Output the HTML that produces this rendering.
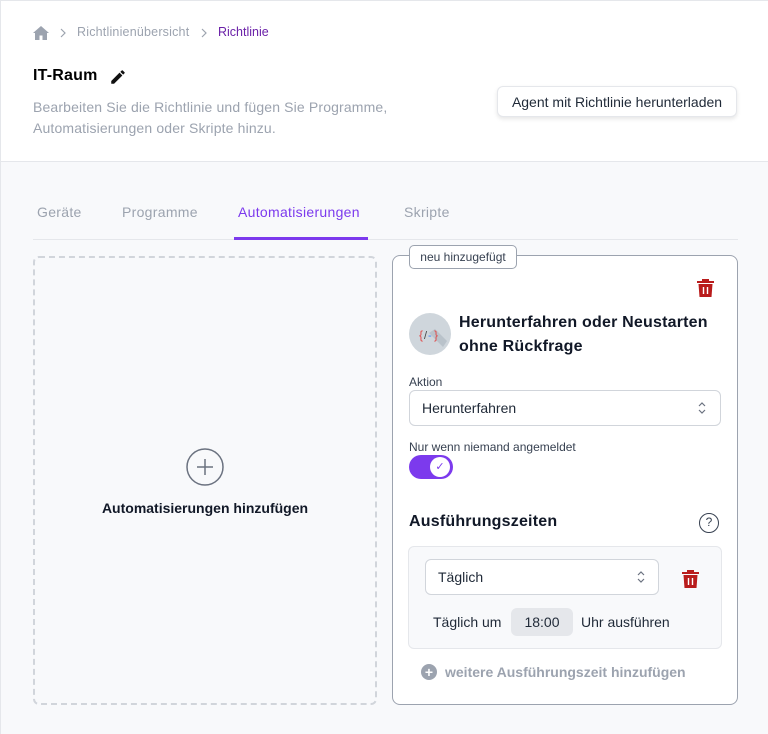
<!DOCTYPE html>
<html><head><meta charset="utf-8"><style>
*{box-sizing:border-box;margin:0;padding:0}
body{width:768px;height:734px;overflow:hidden;font-family:"Liberation Sans",sans-serif;background:#f8f9fb;position:relative;color:#111827}
.hdr{position:absolute;left:0;top:0;width:768px;height:162px;background:#fff;border-top:1px solid #e5e7eb;border-left:1px solid #e5e7eb;border-bottom:1px solid #e5e7eb}
.abs{position:absolute}
.bc{top:25px;font-size:12.5px;color:#9ca3af}
.tab{top:204px;font-size:14px;color:#9ca3af;letter-spacing:.3px}
.sel{border:1px solid #d1d5db;border-radius:6px;background:#fff;font-size:14px;color:#1f2937;padding-left:12px;display:flex;align-items:center}
</style></head><body>
<div class="hdr"></div>
<div style="position:absolute;left:0;top:162px;width:1px;height:572px;background:#e5e7eb"></div>
<svg class="abs" style="left:33px;top:26px" width="16" height="14" viewBox="0 0 16 14"><path d="M8 0L0 7h2v7h4.5V9.5h3V14H14V7h2z" fill="#9ca3af"/></svg>
<svg class="abs" style="left:60px;top:28px" width="6" height="10" viewBox="0 0 6 10"><path d="M1 1l4 4-4 4" fill="none" stroke="#9ca3af" stroke-width="1.2"/></svg>
<div class="abs bc" style="left:77px;letter-spacing:.2px">Richtlinienübersicht</div>
<svg class="abs" style="left:201px;top:28px" width="6" height="10" viewBox="0 0 6 10"><path d="M1 1l4 4-4 4" fill="none" stroke="#9ca3af" stroke-width="1.2"/></svg>
<div class="abs bc" style="left:218px;color:#6b21a8">Richtlinie</div>
<div class="abs" style="left:33px;top:67px;font-size:16px;font-weight:bold;color:#000;letter-spacing:.2px">IT-Raum</div>
<svg class="abs" style="left:109px;top:68px" width="18" height="18" viewBox="0 0 24 24"><path d="M3 17.25V21h3.75L17.81 9.94l-3.75-3.75L3 17.25zM20.71 7.04a1 1 0 000-1.41l-2.34-2.34a1 1 0 00-1.41 0l-1.83 1.83 3.75 3.75 1.83-1.83z" fill="#111"/></svg>
<div class="abs" style="left:33px;top:97px;font-size:14px;line-height:21px;color:#9ca3af;letter-spacing:.15px">Bearbeiten Sie die Richtlinie und fügen Sie Programme,<br>Automatisierungen oder Skripte hinzu.</div>
<div class="abs" style="left:497px;top:86px;width:240px;height:31px;background:#fff;border:1px solid #e5e7eb;border-radius:6px;box-shadow:0 2px 4px rgba(0,0,0,.1);font-size:14px;color:#1f2937;display:flex;align-items:center;justify-content:center">Agent mit Richtlinie herunterladen</div>
<div class="abs tab" style="left:37px">Geräte</div>
<div class="abs tab" style="left:122px">Programme</div>
<div class="abs tab" style="left:238px;color:#7c3aed">Automatisierungen</div>
<div class="abs tab" style="left:404px">Skripte</div>
<div class="abs" style="left:33px;top:239px;width:705px;height:1px;background:#e5e7eb"></div>
<div class="abs" style="left:234px;top:237px;width:134px;height:3px;background:#7c3aed"></div>
<div class="abs" style="left:33px;top:256px;width:344px;height:449px;border:2px dashed #d1d5db;border-radius:6px"></div>
<svg class="abs" style="left:186px;top:448px" width="38" height="38" viewBox="0 0 38 38"><circle cx="19" cy="19" r="18" fill="none" stroke="#6b7280" stroke-width="1.5"/><path d="M19 11v16M11 19h16" stroke="#6b7280" stroke-width="1.5"/></svg>
<div class="abs" style="left:33px;top:500px;width:344px;text-align:center;font-size:14px;font-weight:bold;color:#111827">Automatisierungen hinzufügen</div>
<div class="abs" style="left:392px;top:255px;width:346px;height:450px;background:#fff;border:1px solid #9ca3af;border-radius:8px"></div>
<div class="abs" style="left:409px;top:245px;width:108px;height:24px;background:#fff;border:1px solid #9ca3af;border-radius:5px;font-size:12px;color:#374151;display:flex;align-items:center;justify-content:center">neu hinzugefügt</div>
<svg class="abs" style="left:697px;top:278px" width="17" height="19" viewBox="0 0 17 19"><path d="M5 1h7v2h5v2H0V3h5z" fill="#b91c1c"/><path d="M1.5 6h14l-1 13h-12z" fill="#b91c1c"/><path d="M6.5 9v7M10.5 9v7" stroke="#fff" stroke-width="1.4"/></svg>
<svg class="abs" style="left:409px;top:313px" width="42" height="42" viewBox="0 0 42 42"><circle cx="21" cy="21" r="21" fill="#cfd6dc"/><path d="M20 20l14 14 4-6-12-12z" fill="#b9c2ca"/><text x="10" y="26" font-size="12" fill="#e04b4b" font-family="Liberation Sans">{</text><text x="15" y="26" font-size="11" fill="#444" font-family="Liberation Sans">/</text><text x="19" y="26" font-size="11" fill="#3b82f6" font-family="Liberation Sans">-</text><text x="25" y="26" font-size="12" fill="#e04b4b" font-family="Liberation Sans">}</text></svg>
<div class="abs" style="left:459px;top:311px;font-size:16px;font-weight:bold;line-height:24px;color:#111827;letter-spacing:.2px">Herunterfahren oder Neustarten<br>ohne Rückfrage</div>
<div class="abs" style="left:409px;top:375px;font-size:12px;color:#374151">Aktion</div>
<div class="abs sel" style="left:409px;top:390px;width:312px;height:36px">Herunterfahren</div>
<svg class="abs" style="left:697px;top:400px" width="10" height="16" viewBox="0 0 10 16"><path d="M2 6l3-3 3 3M2 10l3 3 3-3" fill="none" stroke="#6b7280" stroke-width="1.2"/></svg>
<div class="abs" style="left:409px;top:440px;font-size:12px;color:#374151">Nur wenn niemand angemeldet</div>
<div class="abs" style="left:409px;top:455px;width:44px;height:24px;border-radius:12px;background:#7c3aed"></div>
<div class="abs" style="left:430px;top:457px;width:20px;height:20px;border-radius:10px;background:#fff;font-size:11px;color:#7c3aed;text-align:center;line-height:20px">✓</div>
<div class="abs" style="left:409px;top:513px;font-size:16px;font-weight:bold;color:#111827;letter-spacing:.2px">Ausführungszeiten</div>
<div class="abs" style="left:699px;top:513px;width:20px;height:20px;border:1.5px solid #374151;border-radius:50%;font-size:12px;text-align:center;line-height:17px;color:#374151">?</div>
<div class="abs" style="left:408px;top:546px;width:314px;height:103px;background:#f8f9fb;border:1px solid #e5e7eb;border-radius:6px"></div>
<div class="abs sel" style="left:425px;top:559px;width:234px;height:36px">Täglich</div>
<svg class="abs" style="left:636px;top:569px" width="10" height="16" viewBox="0 0 10 16"><path d="M2 6l3-3 3 3M2 10l3 3 3-3" fill="none" stroke="#6b7280" stroke-width="1.2"/></svg>
<svg class="abs" style="left:682px;top:569px" width="17" height="19" viewBox="0 0 17 19"><path d="M5 1h7v2h5v2H0V3h5z" fill="#b91c1c"/><path d="M1.5 6h14l-1 13h-12z" fill="#b91c1c"/><path d="M6.5 9v7M10.5 9v7" stroke="#fff" stroke-width="1.4"/></svg>
<div class="abs" style="left:433px;top:614px;font-size:14px;color:#1f2937">Täglich um</div>
<div class="abs" style="left:511px;top:608px;width:62px;height:28px;background:#e5e7eb;border-radius:6px;font-size:14px;color:#1f2937;text-align:center;line-height:28px">18:00</div>
<div class="abs" style="left:581px;top:614px;font-size:14px;color:#1f2937">Uhr ausführen</div>
<div class="abs" style="left:421px;top:664px;width:16px;height:16px;border-radius:50%;background:#9ca3af;color:#fff;font-size:14px;font-weight:bold;text-align:center;line-height:16px">+</div>
<div class="abs" style="left:445px;top:664px;font-size:14px;font-weight:bold;color:#9ca3af">weitere Ausführungszeit hinzufügen</div>
</body></html>
